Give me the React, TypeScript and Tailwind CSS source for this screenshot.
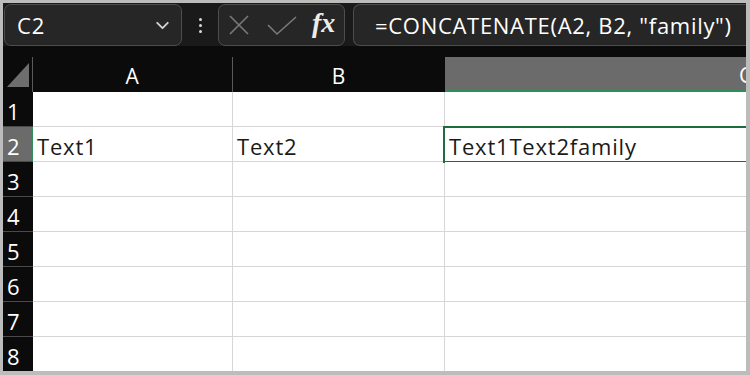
import { ChevronDown } from "lucide-react"

const rows = [1, 2, 3, 4, 5, 6, 7, 8]

const cellFont = { fontFamily: '"Open Sans", "Liberation Sans", sans-serif', letterSpacing: "0.8px" }
const barFont = { fontFamily: '"Open Sans", "Liberation Sans", sans-serif', letterSpacing: "0.7px" }

function Toolbar() {
  return (
    <div className="h-[44px] bg-[#1a1a1a] flex flex-row items-center gap-[8px] pl-[1px] pt-[1px]">
      <div className="w-[178px] h-[42px] rounded-[7px] border border-[#4d4d4d] bg-[#262626] flex flex-row items-center justify-between pl-[12px] pr-[8px]">
        <span className="text-white text-[22px]" style={cellFont}>C2</span>
        <ChevronDown size={21} strokeWidth={2.2} className="text-[#d0d0d0]" />
      </div>
      <div className="w-[20px] flex flex-col items-center gap-[3px]">
        <div className="w-[3px] h-[3px] rounded-full bg-[#d8d8d8]"></div>
        <div className="w-[3px] h-[3px] rounded-full bg-[#d8d8d8]"></div>
        <div className="w-[3px] h-[3px] rounded-full bg-[#d8d8d8]"></div>
      </div>
      <div className="w-[127px] h-[42px] rounded-[7px] border border-[#4d4d4d] bg-[#262626] flex flex-row items-center pl-[9px] gap-[16px]">
        <svg width="22" height="22" viewBox="0 0 22 22" fill="none" stroke="#7a7a7a" strokeWidth="1.6">
          <path d="M2 2 L20 20 M20 2 L2 20" />
        </svg>
        <svg width="32" height="22" viewBox="0 0 32 22" fill="none" stroke="#7a7a7a" strokeWidth="1.6">
          <path d="M2 11 L11 20 L30 3" />
        </svg>
        <span className="text-[#ececec] italic font-bold text-[28px] leading-none -ml-[2px] pb-[4px]" style={{ fontFamily: '"Liberation Serif", serif' }}>fx</span>
      </div>
      <div className="flex-1 h-[42px] rounded-l-[7px] border border-r-0 border-[#4d4d4d] bg-[#262626] flex flex-row items-center pl-[21px]">
        <span className="text-white text-[22px] whitespace-nowrap" style={barFont}>=CONCATENATE(A2, B2, "family")</span>
      </div>
    </div>
  )
}

function HeaderRow() {
  return (
    <div className="h-[46px] bg-[#0b0b0b] grid grid-cols-[30px_200px_212px_1fr] items-end shrink-0">
      <div className="h-[35px] border-r border-[#5a5a5a] flex items-end justify-start pl-[4px] pb-[5px]">
        <svg width="22" height="24" viewBox="0 0 22 24">
          <path d="M22 0 L22 24 L0 24 Z" fill="#6e6e6e" />
        </svg>
      </div>
      <div className="h-[35px] border-r border-[#5a5a5a] flex items-center justify-center pt-[3px] text-white text-[21px] leading-[28px]" style={cellFont}>A</div>
      <div className="h-[35px] flex items-center justify-center pt-[3px] text-white text-[21px] leading-[28px]" style={cellFont}>B</div>
      <div className="h-[35px] bg-[#6b6b6b] border-b-2 border-[#2f8f5b] flex items-center justify-end pt-[3px] text-white text-[21px] leading-[28px] -mr-[7px] overflow-hidden" style={cellFont}>C</div>
    </div>
  )
}

function Row(props: { n: number }) {
  const { n } = props
  const selected = n === 2

  return (
    <div className="grid grid-cols-[30px_200px_212px_1fr] grid-rows-[35px] h-[35px] shrink-0">
      <div
        className={
          selected
            ? "bg-[#6b6b6b] border-r-2 border-[#2f8f5b] border-b border-b-[#4a4a4a] flex items-center pl-[4px] pt-[4px] text-white text-[22px] leading-[28px]"
            : "bg-[#0b0b0b] border-b border-[#4a4a4a] flex items-center pl-[4px] pt-[4px] text-white text-[22px] leading-[28px]"
        }
        style={cellFont}>
        {n}
      </div>
      <div className="bg-white border-r border-b border-[#d6d6d6] flex items-center pl-[4px] pt-[4px] text-[#1a1a1a] text-[22px] leading-[28px]" style={cellFont}>
        {selected ? "Text1" : ""}
      </div>
      <div className="bg-white border-r border-b border-[#d6d6d6] flex items-center pl-[4px] pt-[4px] text-[#1a1a1a] text-[22px] leading-[28px]" style={cellFont}>
        {selected ? "Text2" : ""}
      </div>
      <div className="bg-white border-b border-[#d6d6d6] flex items-center pl-[4px] pt-[4px] text-[#1a1a1a] text-[22px] leading-[28px] relative" style={cellFont}>
        {selected ? "Text1Text2family" : ""}
        {selected && <div className="absolute -left-[2px] -top-[1px] -right-[4px] -bottom-[2px] border-2 border-[#1e6b3e]"></div>}
      </div>
    </div>
  )
}

export default function App() {
  return (
    <div className="w-[750px] h-[375px] bg-[#bcbcbc] pl-[3px] pt-[3px] pr-[4px] pb-[4px]">
      <div className="w-full h-full overflow-hidden flex flex-col bg-white">
        <Toolbar />
        <HeaderRow />
        {rows.map(n => (
          <Row key={n} n={n} />
        ))}
      </div>
    </div>
  )
}
